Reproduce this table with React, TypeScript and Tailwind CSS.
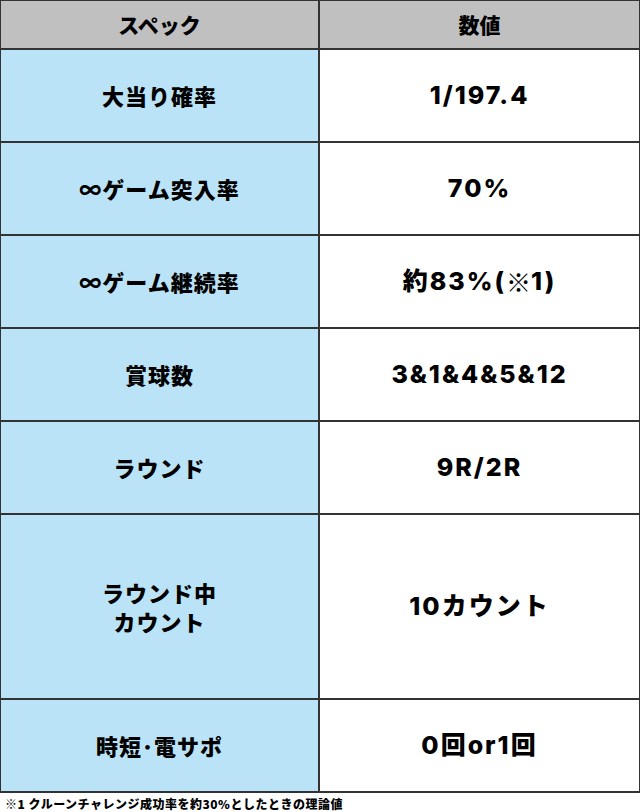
const ROWS: { label: string[]; value: React.ReactNode; key: string; tall?: boolean }[] = [
  { key: 'a', label: ['大当り確率'], value: '1/197.4' },
  { key: 'b', label: ['∞ゲーム突入率'], value: '70%' },
  {
    key: 'c',
    label: ['∞ゲーム継続率'],
    value: (
      <>
        約83%(<span className="font-['Noto_Sans_CJK_JP',sans-serif] font-black tracking-normal">※</span>1)
      </>
    ),
  },
  { key: 'd', label: ['賞球数'], value: '3&1&4&5&12' },
  { key: 'e', label: ['ラウンド'], value: '9R/2R' },
  { key: 'f', label: ['ラウンド中', 'カウント'], value: '10カウント', tall: true },
  { key: 'g', label: ['時短･電サポ'], value: '0回or1回' },
]

const JP = "font-['Noto_Sans_CJK_JP',sans-serif]"
const VAL = "font-['Inter','Noto_Sans_CJK_JP',sans-serif]"

export default function App() {
  return (
    <div className="w-[640px] h-[812px] bg-white text-black">
      <div className="w-[640px] border-t border-l border-r border-[#333]">
        <div className="grid grid-cols-[319px_1fr] h-[49px] border-b-2 border-[#333] bg-[#c0c0c0]">
          <div className={`flex items-center justify-center border-r-2 border-[#333] text-[21px] font-black ${JP}`}>
            スペック
          </div>
          <div className={`flex items-center justify-center text-[21px] font-black ${JP}`}>
            数値
          </div>
        </div>
        {ROWS.map((r) => (
          <div
            key={r.key}
            className={`grid grid-cols-[319px_1fr] border-b-2 border-[#333] ${r.tall ? 'h-[185px]' : 'h-[93px]'}`}
          >
            <div
              className={`flex flex-col items-center justify-center border-r-2 border-[#333] bg-[#bbe3f7] text-[22px] font-black leading-[29px] tracking-[1px] ${JP}`}
            >
              {r.label.map((l) => (
                <span key={l}>{l}</span>
              ))}
            </div>
            <div className={`flex items-center justify-center bg-white text-[25px] font-extrabold tracking-[2px] ${VAL}`}>
              {r.value}
            </div>
          </div>
        ))}
      </div>
      <p className={`pl-[5px] pt-[3px] text-[12px] font-black leading-[16px] tracking-[0.5px] ${JP}`}>
        ※1 クルーンチャレンジ成功率を約30%としたときの理論値
      </p>
    </div>
  )
}
